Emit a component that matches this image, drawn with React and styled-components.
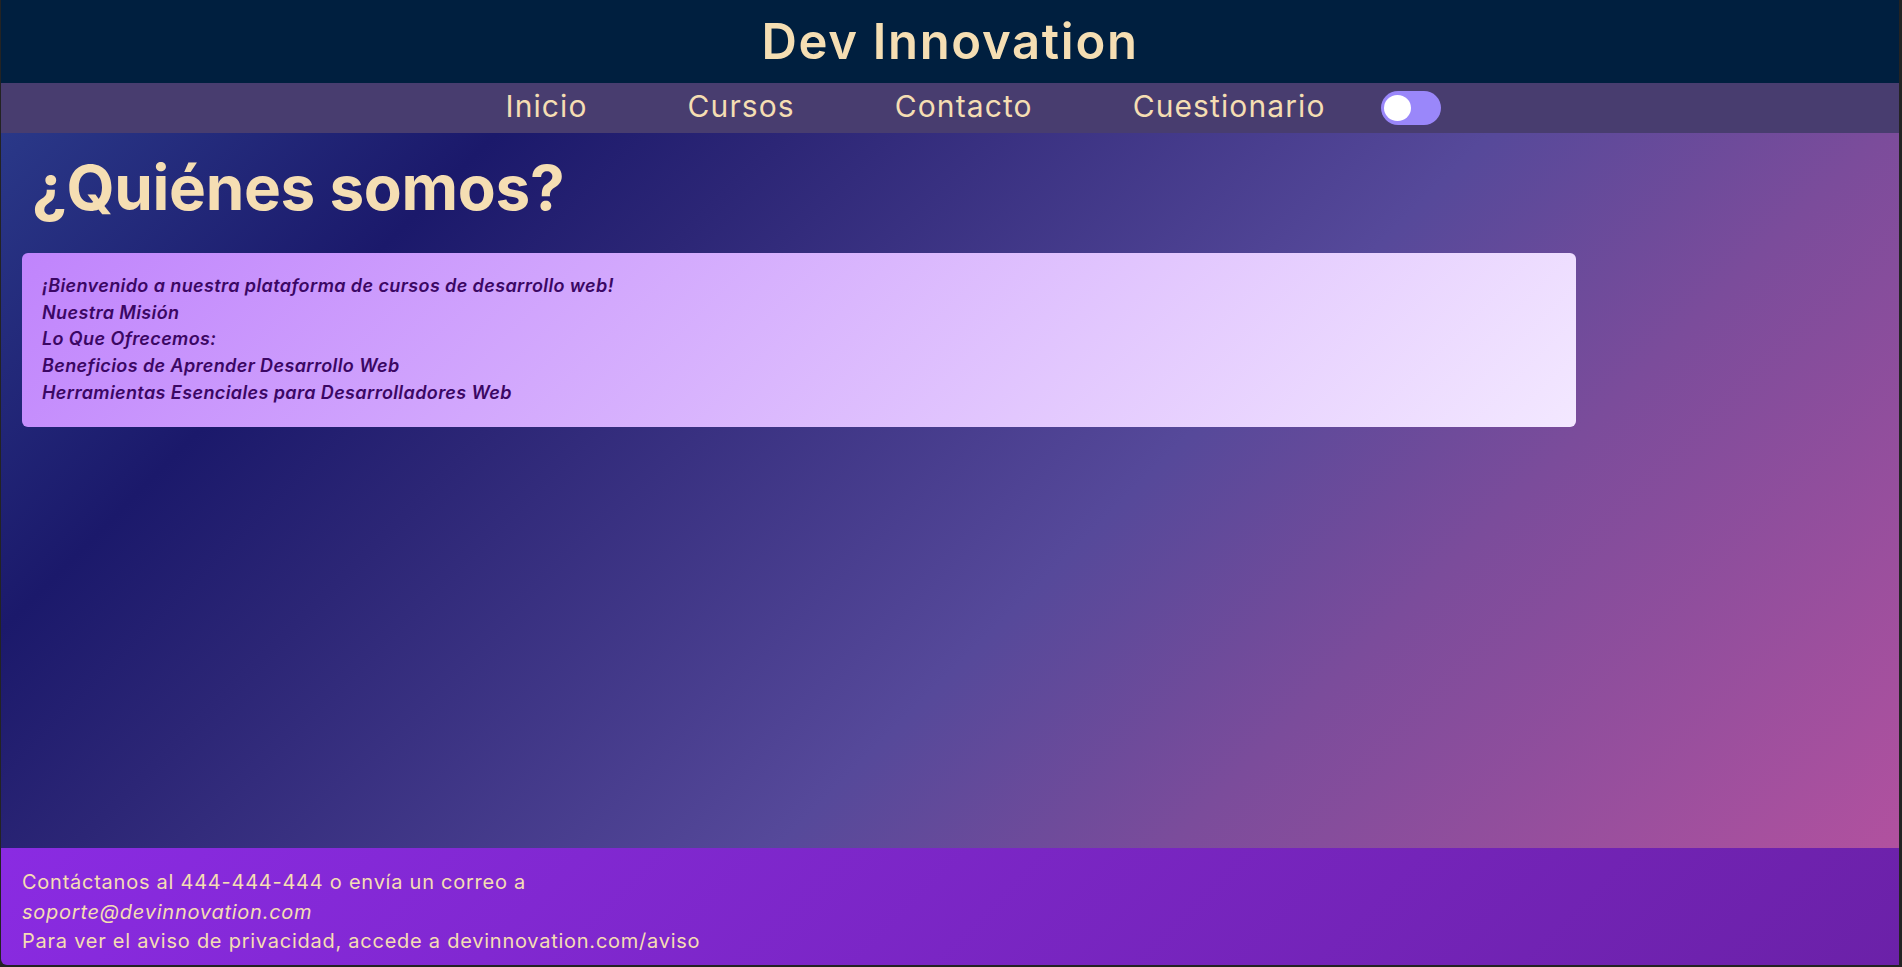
import React from "react";
import styled, { createGlobalStyle } from "styled-components";

const GlobalStyle = createGlobalStyle`
  html, body {
    margin: 0;
    padding: 0;
    background: #232323;
    font-family: Inter, "Open Sans", "Noto Sans", sans-serif;
  }
  * { box-sizing: border-box; }
`;

const Frame = styled.div`
  height: calc(100vh - 2px);
  margin: 0 3px 0 1px;
  display: flex;
  flex-direction: column;
  overflow: hidden;
  border-bottom-left-radius: 6px;
`;

const Header = styled.header`
  flex: 0 0 83px;
  background: #001f3f;
  display: flex;
  align-items: center;
  justify-content: center;
`;

const Title = styled.h1`
  margin: 0;
  font-size: 49px;
  font-weight: 600;
  line-height: 1;
  color: #f5deb3;
  letter-spacing: 1.7px;
`;

const Nav = styled.nav`
  flex: 0 0 50px;
  background: #483d6f;
  display: flex;
  align-items: center;
  justify-content: center;
  padding-right: 4px;
`;

const NavLink = styled.a`
  margin: 0 50px;
  font-size: 30px;
  line-height: 1;
  color: #f5deb3;
  text-decoration: none;
  letter-spacing: 1.1px;
  padding-bottom: 4px;
`;

const Toggle = styled.span`
  position: relative;
  display: inline-block;
  width: 60px;
  height: 34px;
  margin-left: 5px;
  border-radius: 17px;
  background: #9a87fa;
`;

const Knob = styled.span`
  position: absolute;
  top: 4px;
  left: 3px;
  width: 27px;
  height: 26px;
  border-radius: 50%;
  background: #ffffff;
`;

const Main = styled.main`
  flex: 1 1 auto;
  padding: 0 21px;
  background: linear-gradient(
    135deg,
    #2a3888 0%,
    #1b196b 19%,
    #2c2676 30%,
    #56499a 57%,
    #7b4c9b 72%,
    #b1519f 100%
  );
`;

const Heading = styled.h2`
  margin: 17px 0 28px 10px;
  font-size: 62px;
  font-weight: 700;
  line-height: 75px;
  color: #f5deb3;
  letter-spacing: -0.3px;
`;

const Card = styled.section`
  width: 1554px;
  padding: 20px;
  border-radius: 6px;
  background: linear-gradient(135deg, #c084fc 0%, #f3e8ff 100%);
`;

const CardLine = styled.p`
  margin: 0;
  font-size: 18px;
  line-height: 26.7px;
  font-style: italic;
  font-weight: 600;
  color: #3b0764;
  letter-spacing: 0.4px;
`;

const Footer = styled.footer`
  flex: 0 0 117px;
  padding: 20px 21px 8px;
  background: linear-gradient(135deg, #8a2be2 0%, #6b21a8 100%);
  color: #f5deb3;
`;

const FooterLine = styled.p`
  margin: 0;
  font-size: 20px;
  line-height: 29.5px;
  font-style: ${(p) => (p.$italic ? "italic" : "normal")};
  letter-spacing: 0.75px;
`;

const lines = [
  "¡Bienvenido a nuestra plataforma de cursos de desarrollo web!",
  "Nuestra Misión",
  "Lo Que Ofrecemos:",
  "Beneficios de Aprender Desarrollo Web",
  "Herramientas Esenciales para Desarrolladores Web",
];

export default function App() {
  return (
    <>
      <GlobalStyle />
      <Frame>
        <Header>
          <Title>Dev Innovation</Title>
        </Header>
        <Nav>
          <NavLink href="#">Inicio</NavLink>
          <NavLink href="#">Cursos</NavLink>
          <NavLink href="#">Contacto</NavLink>
          <NavLink href="#">Cuestionario</NavLink>
          <Toggle>
            <Knob />
          </Toggle>
        </Nav>
        <Main>
          <Heading>¿Quiénes somos?</Heading>
          <Card>
            {lines.map((l) => (
              <CardLine key={l}>{l}</CardLine>
            ))}
          </Card>
        </Main>
        <Footer>
          <FooterLine>Contáctanos al 444-444-444 o envía un correo a</FooterLine>
          <FooterLine $italic>soporte@devinnovation.com</FooterLine>
          <FooterLine>Para ver el aviso de privacidad, accede a devinnovation.com/aviso</FooterLine>
        </Footer>
      </Frame>
    </>
  );
}
